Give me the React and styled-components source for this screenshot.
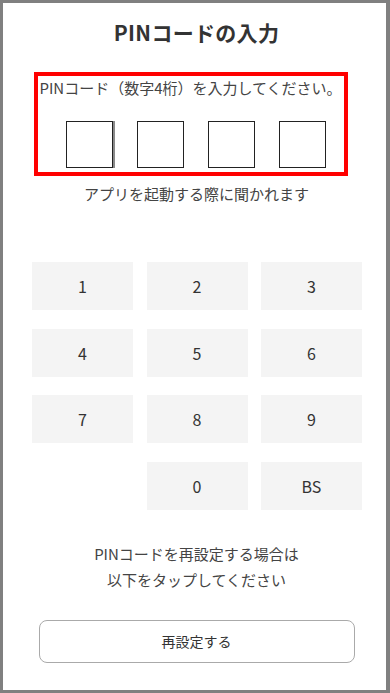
import React, { useState } from 'react';
import styled, { createGlobalStyle } from 'styled-components';

const GlobalStyle = createGlobalStyle`
  html, body {
    margin: 0;
    padding: 0;
    background: #fff;
  }
  body {
    font-family: "Noto Sans CJK JP", "Noto Sans", sans-serif;
    color: #333;
  }
`;

const KEYS = ['1', '2', '3', '4', '5', '6', '7', '8', '9', '', '0', 'BS'];

const App = () => {
  const [pin, setPin] = useState('');

  const press = (key) => {
    if (key === 'BS') {
      setPin((p) => p.slice(0, -1));
    } else if (pin.length < 4) {
      setPin((p) => p + key);
    }
  };

  return (
    <>
      <GlobalStyle />
      <Screen>
        <Title>PINコードの入力</Title>
        <PinArea>
          <PinLabel>PINコード（数字4桁）を入力してください。</PinLabel>
          <PinRow>
            {[0, 1, 2, 3].map((i) => (
              <PinBox key={i} $active={i === pin.length}>
                {pin[i] ? '●' : ''}
              </PinBox>
            ))}
          </PinRow>
        </PinArea>
        <Hint>アプリを起動する際に聞かれます</Hint>

        <Keypad>
          {KEYS.map((key, i) =>
            key ? (
              <Key key={i} onClick={() => press(key)}>
                {key}
              </Key>
            ) : (
              <span key={i} />
            )
          )}
        </Keypad>

        <ResetText>
          PINコードを再設定する場合は
          <br />
          以下をタップしてください
        </ResetText>
        <ResetButton>再設定する</ResetButton>
      </Screen>
    </>
  );
};

const Screen = styled.div`
  box-sizing: border-box;
  width: 390px;
  height: 693px;
  border: 3px solid #808080;
  border-right-width: 4px;
  background: #fff;
  display: flex;
  flex-direction: column;
  align-items: center;
  padding-top: 14px;
`;

const Title = styled.h1`
  margin: 0;
  font-size: 21px;
  line-height: 30px;
  font-weight: 700;
  color: #333;
  letter-spacing: 0.3px;
  transform: translateX(2px);
`;

const PinArea = styled.div`
  box-sizing: border-box;
  width: 314px;
  margin-top: 25px;
  margin-right: 8px;
  border: 4px solid #ff0000;
  padding: 2px 0 4px;
  display: flex;
  flex-direction: column;
`;

const PinLabel = styled.p`
  margin: 0;
  font-size: 15px;
  line-height: 20px;
  color: #444;
  text-align: center;
  white-space: nowrap;
`;

const PinRow = styled.div`
  display: flex;
  gap: 24px;
  padding-left: 28px;
  margin-top: 23px;
`;

const PinBox = styled.div`
  box-sizing: border-box;
  width: 47px;
  height: 47px;
  border: 1px solid #222;
  background: #fff;
  display: flex;
  align-items: center;
  justify-content: center;
  font-size: 18px;
  box-shadow: ${({ $active }) => ($active ? '2px 0 0 #8a8a8a' : 'none')};
`;

const Hint = styled.p`
  margin: 8px 0 0;
  font-size: 15px;
  line-height: 20px;
  color: #444;
  transform: translateX(2px);
`;

const Keypad = styled.div`
  align-self: stretch;
  display: grid;
  grid-template-columns: repeat(3, 101px);
  grid-auto-rows: 48px;
  column-gap: 13.5px;
  row-gap: 18.5px;
  padding-left: 29px;
  margin-top: 58px;
`;

const Key = styled.button`
  border: none;
  background: #f4f4f4;
  font-family: "Noto Sans CJK JP", "Noto Sans", sans-serif;
  font-size: 16px;
  color: #333;
  cursor: pointer;
  padding: 0;
`;

const ResetText = styled.p`
  margin: 31px 0 0;
  font-size: 15px;
  line-height: 26px;
  color: #444;
  text-align: center;
  transform: translateX(2px);
`;

const ResetButton = styled.button`
  box-sizing: border-box;
  width: 316px;
  height: 43px;
  margin-top: 27px;
  transform: translateX(2px);
  border: 1px solid #aaa;
  border-radius: 8px;
  background: #fff;
  font-family: "Noto Sans CJK JP", "Noto Sans", sans-serif;
  font-size: 14px;
  color: #333;
  cursor: pointer;
`;

export default App;
